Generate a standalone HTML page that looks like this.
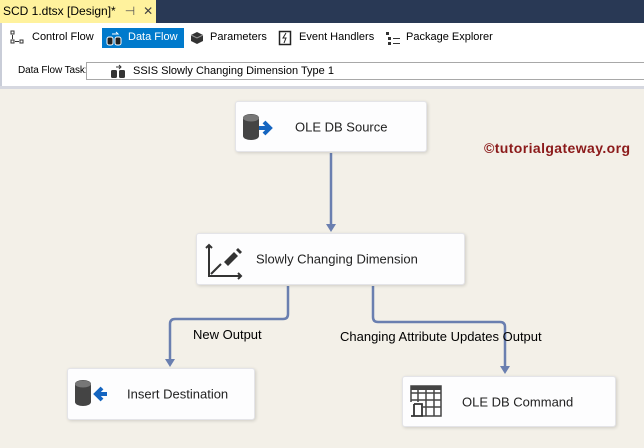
<!DOCTYPE html>
<html><head><style>
*{margin:0;padding:0;box-sizing:border-box}
body{width:644px;height:448px;overflow:hidden;position:relative;background:#f3f0e8;font-family:"Liberation Sans",sans-serif;font-size:12px;color:#000}
.abs{position:absolute}
.tb{font-size:11px}
.box{position:absolute;background:#fdfdfe;border:1px solid #e4e4e8;border-radius:3px;box-shadow:1px 1px 3px rgba(0,0,0,.15);font-size:13px;color:#222}
.box span{position:absolute;top:50%;transform:translateY(-50%);white-space:nowrap}
</style></head><body>
<div class="abs" style="left:0;top:0;width:644px;height:23px;background:#293955"></div>
<div class="abs" style="left:0;top:0;width:156px;height:23px;background:#fff29d;font-size:12px;padding:4px 0 0 3px;white-space:nowrap">SCD 1.dtsx [Design]*<span style="margin-left:9px;color:#555">⊣</span><span style="margin-left:8px;color:#444">✕</span></div>
<div class="abs" style="left:0;top:23px;width:644px;height:63px;background:#fff;border-left:2px solid #c9cdd8"></div>
<svg class="abs" style="left:10px;top:30px" width="16" height="16"><rect x="1" y="1" width="3" height="3" fill="none" stroke="#333"/><rect x="1" y="10" width="3" height="3" fill="none" stroke="#333"/><rect x="10" y="10" width="3" height="3" fill="none" stroke="#333"/><path d="M2.5 5v4M5 11.5h4" stroke="#333"/></svg>
<div class="abs tb" style="left:32px;top:31px">Control Flow</div>
<div class="abs" style="left:102px;top:28px;width:82px;height:20px;background:#007acc"></div>
<svg class="abs" style="left:106px;top:30px" width="18" height="16"><rect x="1" y="7" width="6" height="8" rx="2" fill="#222" stroke="#fff"/><rect x="9" y="7" width="6" height="8" rx="2" fill="#222" stroke="#fff"/><path d="M6 4h6l-2-2" stroke="#fff" fill="none"/></svg>
<div class="abs tb" style="left:128px;top:31px;color:#fff">Data Flow</div>
<svg class="abs" style="left:189px;top:30px" width="16" height="16"><path d="M2 5l6-3 6 3v6l-6 3-6-3z" fill="#333"/><path d="M2 5l6 3 6-3" stroke="#999" fill="none"/></svg>
<div class="abs tb" style="left:210px;top:31px">Parameters</div>
<svg class="abs" style="left:278px;top:30px" width="14" height="16"><rect x="1.5" y="1.5" width="11" height="13" fill="none" stroke="#222" stroke-width="1.5"/><path d="M8 3l-3 5h3l-2 5" stroke="#222" fill="none"/></svg>
<div class="abs tb" style="left:299px;top:31px">Event Handlers</div>
<svg class="abs" style="left:385px;top:30px" width="16" height="16"><rect x="1" y="2" width="3" height="3" fill="#333"/><rect x="3" y="7" width="3" height="3" fill="#333"/><rect x="3" y="12" width="3" height="3" fill="#333"/><path d="M8 8.5h7M8 13.5h7" stroke="#333"/></svg>
<div class="abs tb" style="left:406px;top:31px">Package Explorer</div>
<div class="abs" style="left:18px;top:65px;font-size:10px;letter-spacing:-0.1px">Data Flow Task:</div>
<div class="abs" style="left:86px;top:62px;width:560px;height:18px;border:1px solid #a8a8a8;background:#fff"></div>
<svg class="abs" style="left:110px;top:64px" width="16" height="15"><rect x="1" y="6" width="6" height="8" rx="1.5" fill="#333"/><rect x="9" y="6" width="6" height="8" rx="1.5" fill="#333"/><path d="M6 3h5M9 1l2 2-2 2" stroke="#333" fill="none"/></svg>
<div class="abs tb" style="left:133px;top:65px">SSIS Slowly Changing Dimension Type 1</div>
<div class="abs" style="left:0;top:86px;width:644px;height:3px;background:#d6d8e0"></div>
<div class="abs" style="left:484px;top:140px;font-weight:bold;font-size:14px;letter-spacing:0.4px;color:#8b1a1a;white-space:nowrap">©tutorialgateway.org</div>
<svg class="abs" style="left:0;top:0" width="644" height="448">
<g stroke="#6a7fb0" stroke-width="2.5" fill="none">
<path d="M331 153V226"/>
<path d="M288 286V314q0 5-5 5H175q-5 0-5 5V361"/>
<path d="M373 286V317q0 5 5 5H500q5 0 5 5V368"/>
</g>
<g fill="#6a7fb0"><path d="M326 224h10l-5 8z"/><path d="M165 359h10l-5 8z"/><path d="M500 366h10l-5 8z"/></g>
</svg>
<div class="abs" style="left:193px;top:327px;font-size:13px">New Output</div>
<div class="abs" style="left:340px;top:329px;font-size:13px;white-space:nowrap">Changing Attribute Updates Output</div>
<div class="box" style="left:235px;top:101px;width:192px;height:51px">
<svg class="abs" style="left:6px;top:11px" width="40" height="30"><path d="M1 5a8 4 0 0 1 16 0v18a8 4 0 0 1-16 0z" fill="#444"/><ellipse cx="9" cy="5" rx="8" ry="3.5" fill="#777"/><path d="M17 15h9M22 9l6 6-6 6" stroke="#1565c0" stroke-width="4" fill="none"/></svg>
<span style="left:59px">OLE DB Source</span></div>
<div class="box" style="left:196px;top:233px;width:269px;height:52px">
<svg class="abs" style="left:7px;top:8px" width="40" height="38"><path d="M5 3v31h32" stroke="#333" stroke-width="2" fill="none"/><path d="M2 6l3-3 3 3M34 31l3 3-3 3" stroke="#333" stroke-width="2" fill="none"/><path d="M7 32l10-10" stroke="#333" stroke-width="2"/><path d="M20 20l10-10 4 4-10 10z" fill="#333"/><path d="M32 8l2-2 4 4-2 2z" fill="#333"/></svg>
<span style="left:59px">Slowly Changing Dimension</span></div>
<div class="box" style="left:67px;top:368px;width:188px;height:52px">
<svg class="abs" style="left:6px;top:10px" width="40" height="30"><path d="M1 5a8 4 0 0 1 16 0v18a8 4 0 0 1-16 0z" fill="#444"/><ellipse cx="9" cy="5" rx="8" ry="3.5" fill="#777"/><path d="M33 15h-9M28 9l-6 6 6 6" stroke="#1565c0" stroke-width="4" fill="none"/></svg>
<span style="left:59px">Insert Destination</span></div>
<div class="box" style="left:402px;top:376px;width:214px;height:51px">
<svg class="abs" style="left:7px;top:8px" width="34" height="36"><g stroke="#444" stroke-width="1.5" fill="none"><rect x="1" y="1" width="30" height="30"/><path d="M1 8h30M1 15h30M1 22h30M8 1v30M16 1v30M24 1v30"/></g><rect x="1" y="1" width="30" height="4" fill="#444"/><rect x="0" y="17" width="13" height="16" fill="#fff"/><path d="M4 19h8v12M4 19v12h-3M4 31h9" stroke="#333" stroke-width="1.8" fill="none"/></svg>
<span style="left:59px">OLE DB Command</span></div>
</body></html>
